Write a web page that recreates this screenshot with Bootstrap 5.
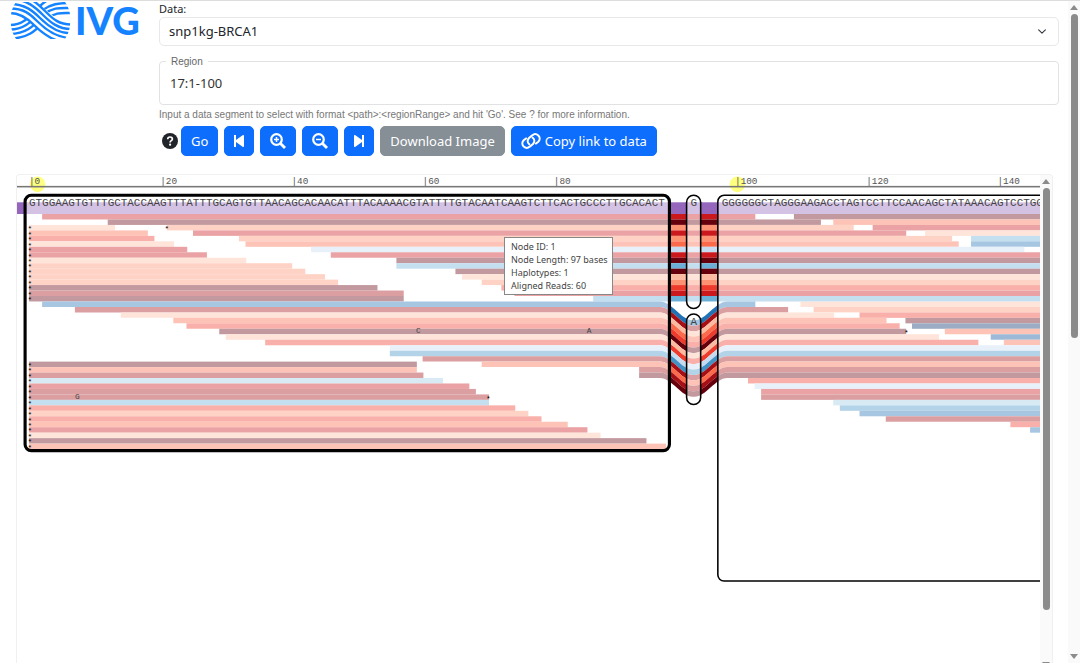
<!DOCTYPE html>
<html lang="en">
<head>
<meta charset="utf-8">
<meta name="viewport" content="width=device-width, initial-scale=1">
<title>IVG</title>
<link href="https://cdn.jsdelivr.net/npm/bootstrap@5.3.0/dist/css/bootstrap.min.css" rel="stylesheet">
<style>
  body { font-family: "Noto Sans", "Open Sans", sans-serif; font-size: 14px; height: 100vh; border-top: 1px solid #ddd; }
  .brand { width: 159px; padding-left: 10px; color: #1583ff; }
  .brand-name { font: 900 38px/38px Lato, sans-serif; }
  .data-label { font-size: 11px; line-height: 16px; color: #212529; }
  .controls { padding-right: 9px; }
  .form-select.track-select { height: 29px; padding: 0 36px 0 9px; font-size: 13px; line-height: 27px; border-color: #e6e8ea; border-radius: 5px; background-size: 12px 9px; background-position: right 10px center; }
  .region-box { border: 1px solid #e2e2e2; border-radius: 4px; height: 50px; margin-top: 9px; padding: 0 10px; }
  .region-box legend { float: none; width: auto; margin: 0 0 0 -4px; padding: 0 5px; font: 10px/13px "Liberation Sans", sans-serif; color: #666; }
  .region-box input { height: 30px; font-size: 13px; color: #333; outline: 0; }
  .hint { font: 10px/14px "Liberation Sans", sans-serif; color: #777; margin: 3px 0 4px; }
  .tools .btn { height: 30px; padding: 0 9px; font-size: 13px; line-height: 28px; border-radius: 5px; display: flex; align-items: center; }
  .tools .btn-secondary { background: #868e96; border-color: #868e96; }
  .help { width: 16px; height: 16px; margin: 0 3px; }
  .viewer { margin: 18px 15px 0 16px; border: 1px solid #f0f0f0; border-bottom: 0; border-radius: 4px 4px 0 0; }
  .bar-track { background: #fafafa; width: 12px; }
  .bar-thumb { width: 7px; border-radius: 4px; background: #8b8b8b; }
  .arrow-up, .arrow-down { border: 4px solid transparent; width: 0; height: 0; }
  .arrow-up { border-top: 0; border-bottom: 5px solid #8b8b8b; }
  .arrow-down { border-bottom: 0; border-top: 5px solid #8b8b8b; }
  .viewer .arrow-down { margin-bottom: -4px; }
  .tube { font-family: "Liberation Mono", monospace; }
  .node-tip { left: 487px; top: 62px; width: 109px; padding: 2px 6px; background: #fff; border: 1px solid #888; font-size: 9px; line-height: 13px; color: #444; white-space: nowrap; }
</style>
</head>
<body class="d-flex overflow-hidden bg-white">
<div class="flex-grow-1 d-flex flex-column" style="min-width:0">
  <header class="d-flex">
    <div class="brand flex-shrink-0 d-flex">
      <svg width="61" height="38" viewBox="0 0 61 38" fill="none" stroke="#1583ff" stroke-width="2.4" role="img" aria-label="IVG logo">
        <defs><clipPath id="hex"><path d="M6 1H55Q61 9 60 19Q61 29 55 38H6Q0 29 1 19Q0 9 6 1Z"/></clipPath></defs>
        <g clip-path="url(#hex)">
          <path d="M0 24C14 24 21 14 30 5S46 -4 61 -4M0 28.500C18 28.500 25 15 33 9S48 2 61 2M0 33C20 33 27 20 35 13S50 7 61 7M0 37.500C22 37.500 29 25 37 18S52 12 61 12"/>
          <path stroke="#fff" stroke-width="19" d="M0 4C30 4 33 31 61 31"/>
          <path d="M0 12C9 12 16 16 24 24S44 42 61 42M0 7.500C14 7.500 20 13 27 20S45 37 61 37M0 3C15 3 23 10 30 17S47 32.500 61 32.500M0 -2C17 -2 26 7 33 14S48 28 61 28M0 -7C19 -7 29 4 36 11S49 23.500 61 23.500"/>
        </g>
      </svg>
      <span class="brand-name ms-1">IVG</span>
    </div>
    <form class="controls flex-grow-1">
      <label class="data-label d-block" for="data">Data:</label>
      <select class="form-select track-select" id="data"><option>snp1kg-BRCA1</option></select>
      <fieldset class="region-box">
        <legend><label for="region">Region</label></legend>
        <input class="w-100 border-0 p-0 d-block" id="region" type="text" value="17:1-100">
      </fieldset>
      <p class="hint">Input a data segment to select with format &lt;path&gt;:&lt;regionRange&gt; and hit 'Go'. See ? for more information.</p>
      <div class="tools d-flex align-items-center">
        <svg class="help" viewBox="0 0 16 16" role="img" aria-label="Help"><circle cx="8" cy="8" r="8" fill="#212529"/><path d="M5.700 6.200C5.700 3.300 10.400 3.300 10.400 6.100C10.400 7.700 8.100 7.700 8.100 9.500" fill="none" stroke="#fff" stroke-width="1.700"/><circle cx="8.100" cy="11.700" r="1.100" fill="#fff"/></svg>
        <div class="d-flex" style="gap:6px">
          <button type="button" class="btn btn-primary">Go</button>
          <button type="button" class="btn btn-primary" aria-label="Previous"><svg width="10" height="12" viewBox="0 0 10 12" fill="#fff"><path d="M0 0h2v5L8.600 .3Q10 -.3 10 1V11Q10 12.300 8.600 11.700L2 7V12H0Z"/></svg></button>
          <button type="button" class="btn btn-primary" aria-label="Zoom in"><svg width="16" height="16" viewBox="0 0 16 16" fill="none" stroke="#fff" stroke-width="2.200"><circle cx="6.500" cy="6.500" r="5.300"/><path d="M10.500 10.500L15 15" stroke-width="2.800"/><path d="M6.500 4v5M4 6.500h5" stroke-width="1.500"/></svg></button>
          <button type="button" class="btn btn-primary" aria-label="Zoom out"><svg width="16" height="16" viewBox="0 0 16 16" fill="none" stroke="#fff" stroke-width="2.200"><circle cx="6.500" cy="6.500" r="5.300"/><path d="M10.500 10.500L15 15" stroke-width="2.800"/><path d="M4 6.500h5" stroke-width="1.500"/></svg></button>
          <button type="button" class="btn btn-primary" aria-label="Next"><svg width="10" height="12" viewBox="0 0 10 12" fill="#fff"><path d="M10 0H8v5L1.400 .3Q0 -.3 0 1V11Q0 12.300 1.400 11.700L8 7V12h2Z"/></svg></button>
          <button type="button" class="btn btn-secondary">Download Image</button>
          <button type="button" class="btn btn-primary"><svg class="me-1" width="20" height="16" viewBox="0 0 20 16" fill="none" stroke="#fff" stroke-width="2" stroke-linecap="round"><path d="M8.300 11.300C6 9.500 6.300 6.800 8 5L11.200 2.400C13 .8 15.600 .9 17.300 2.500C19.300 4.500 19 7 17.300 8.700L15 10.600"/><path d="M11.700 4.700C14 6.500 13.700 9.200 12 11L8.800 13.600C7 15.200 4.400 15.100 2.700 13.500C.7 11.500 1 9 2.700 7.300L5 5.400"/></svg>Copy link to data</button>
        </div>
      </div>
    </form>
  </header>
  <main class="viewer flex-grow-1 d-flex position-relative overflow-hidden">
    <svg class="tube flex-grow-1 h-100" id="tube" style="min-width:0"></svg>
    <div class="bar-track d-flex flex-column align-items-center flex-shrink-0">
      <span class="arrow-up mt-1 mb-1"></span>
      <span class="bar-thumb" style="height:86.500%"></span>
      <span class="arrow-down mt-auto"></span>
    </div>
    <div class="node-tip position-absolute">Node ID: 1<br>Node Length: 97 bases<br>Haplotypes: 1<br>Aligned Reads: 60</div>
  </main>
</div>
<aside class="bar-track d-flex flex-column align-items-center flex-shrink-0">
  <span class="arrow-up mt-1 mb-1"></span>
  <span class="bar-thumb" style="height:49%"></span>
  <span class="arrow-down mt-auto mb-1"></span>
</aside>
<script src="https://cdn.jsdelivr.net/npm/bootstrap@5.3.0/dist/js/bootstrap.bundle.min.js"></script>
<script>
  // Track units: one base is 8.4 wide, one read is 7 high; the whole map is zoomed by ZOOM.
  const ZOOM = 0.781, BASE = 8.4, ROW = 7, RIGHT = 887, DIP = 24;
  const R = { a:'#67000d', b:'#a50f15', c:'#cb181d', d:'#ef3b2c', e:'#fb6a4a', f:'#fc9272', g:'#fcbba1',
              h:'#08306b', i:'#08519c', j:'#2171b5', k:'#4292c6', l:'#6baed6', m:'#9ecae1', n:'#c6dbef' };
  const seq1 = 'GTGGAAGTGTTTGCTACCAAGTTTATTTGCAGTGTTAACAGCACAACATTTACAAAACGTATTTTGTACAATCAAGTCTTCACTGCCCTTGCACACT';
  const seq3 = 'GGGGGGCTAGGGAAGACCTAGTCCTTCCAACAGCTATAAACAGTCCTGG';
  // reads that stay in node 1: [row, end base, colour]
  const left = [[2,13,'g'],[3,18,'e'],[4,19,'d'],[5,22,'g'],[6,24,'c'],[7,27,'c'],[8,33,'g'],[9,40,'f'],[10,42,'f'],[11,45,'f'],[12,47,'f'],[13,53,'a'],[14,57,'b'],[15,57,'a'],
    [27,59,'a'],[28,59,'e'],[29,60,'b'],[30,63,'m'],[31,67,'c'],[32,68,'b'],[33,70,'b'],[34,70,'l'],[35,74,'d'],[36,76,'f'],[37,78,'d'],[38,82,'e'],[39,85,'c'],[40,87,'g'],[41,94,'a'],[42,97,'e']];
  // reads that run on into node 3: [start base in node 1, end base in node 3, colour], one per row
  const across = [[2,5,'c'],[12,15,'a'],[21,20,'f'],[25,28,'c'],[32,35,'f'],[33,36,'e'],[43,46,'n'],[46,60,'c'],[56,60,'a'],[56,60,'l'],[65,60,'a'],[66,60,'g'],[69,60,'f'],[72,60,'d'],[74,60,'c'],[86,60,'l'],
    [2,5,'j'],[7,10,'b'],[14,17,'g'],[22,25,'e'],[24,27,'d'],[29,28,'a'],[30,33,'g'],[36,39,'d'],[55,60,'n'],[55,60,'k'],[60,60,'b'],[69,60,'e'],[93,60,'b'],[93,60,'a']];
  // reads that begin in node 3: [row, start base, colour]
  const right = [[0,11,'a'],[1,17,'e'],[2,23,'c'],[3,31,'g'],[4,38,'l'],[5,38,'j'],[16,12,'g'],[17,14,'f'],[18,21,'d'],[19,28,'a'],[20,29,'h'],[21,34,'e'],[22,41,'i'],[23,43,'e'],
    [30,4,'d'],[31,5,'n'],[32,6,'c'],[33,6,'b'],[34,17,'m'],[35,18,'k'],[36,21,'j'],[37,25,'b'],[38,44,'d'],[39,47,'j']];
  const X = b => b * BASE, X3 = b => RIGHT + b * BASE;
  const rect = (x1, x2, y, c, h = ROW) => `<rect x="${x1}" y="${y}" width="${x2 - x1}" height="${h}" fill="${c}"/>`;
  const text = (x, y, s, size, more = '') => `<text x="${x}" y="${y}" font-size="${size}" ${more}>${s}</text>`;
  let bars = rect(-16, 1400, -15, '#9467bd', 15), marks = '';
  const star = (x, row) => { marks += text(x, row * ROW + 8, '*', 10, 'text-anchor="middle" fill="#000"'); };
  left.forEach(([r, e, c]) => { bars += rect(0, X(e) + 1, r * ROW, R[c]); star(1, r); });
  right.forEach(([r, s, c]) => { bars += rect(X3(s), 1400, r * ROW, R[c]); });
  across.forEach(([s, e, c], r) => {
    const y = r * ROW;
    if (r < 16) { bars += rect(X(s), X3(e) + 1, y, R[c]); return; }
    const d = y + DIP, z = y + ROW, dz = d + ROW;
    bars += `<path fill="${R[c]}" d="M${X(s)} ${y}H808C823 ${y} 835 ${d} 850 ${d}H852C867 ${d} 879 ${y} 894 ${y}H${X3(e) + 1}V${z}H894C879 ${z} 867 ${dz} 852 ${dz}H850C835 ${dz} 823 ${z} 808 ${z}H${X(s)}Z"/>`;
  });
  star(X(21), 2); star(X(70), 33); star(X3(28) + 1, 21);
  marks += text(X(7), 33 * ROW + 6, 'G', 10) + text(X(59), 21 * ROW + 6, 'C', 10) + text(X(85), 21 * ROW + 6, 'A', 10);
  const node = (x, y, w, h, r, sw) => `<rect x="${x}" y="${y}" width="${w}" height="${h}" rx="${r}" fill="#fff" fill-opacity=".6" stroke="#000" stroke-width="${sw}"/>`;
  const nodes = node(-5, -24, 825, 327, 8, 4) + node(842, -24, 18, 145, 9, 2) + node(842, 128, 18, 116, 9, 2) + node(882, -24, 700, 494, 8, 2);
  const letters = text(0, -10, seq1, 14) + text(847, -10, 'G', 14) + text(847, 142, 'A', 14) + text(RIGHT, -10, seq3, 14);
  const ruler = '<circle cx="11" cy="-38" r="10" fill="#ffff80"/><circle cx="907" cy="-38" r="10" fill="#ffff80"/>' +
    rect(-16, 1400, -36, '#777', 2) +
    [[0,0],[168,20],[336,40],[504,60],[672,80],[904,100],[1072,120],[1240,140]].map(([x, n]) => text(x, -38, '|' + n, 12, 'fill="#555"')).join('');
  document.getElementById('tube').innerHTML = `<g transform="translate(12 39) scale(${ZOOM})">${bars}${nodes}<g fill="#444">${letters}${marks}</g>${ruler}</g>`;
</script>
</body>
</html>
